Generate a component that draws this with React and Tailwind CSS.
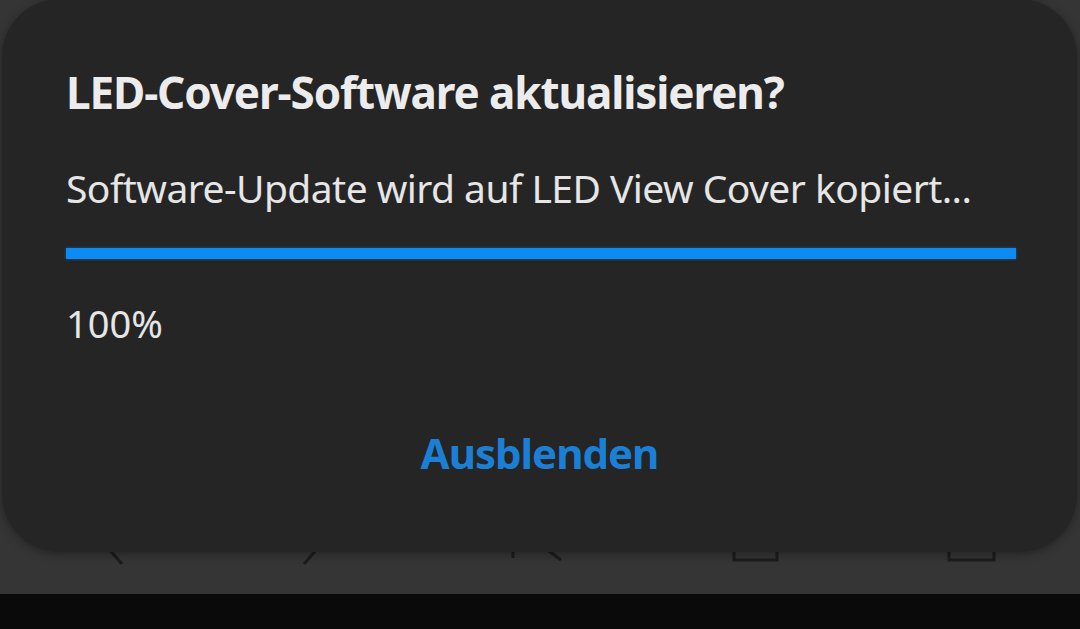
import React from "react";

const NavIcons = () => (
    <div className="absolute left-0 right-0 top-[528px] h-[40px]">
        {/* back-ish chevrons, home, recents — only their bottoms peek out */}
        <svg className="absolute left-[100px] top-0" width="30" height="40" viewBox="0 0 30 40">
            <path d="M22 4 L8 20 L22 36" fill="none" stroke="#1c1c1c" strokeWidth="3" />
        </svg>
        <svg className="absolute left-[296px] top-0" width="30" height="40" viewBox="0 0 30 40">
            <path d="M8 4 L22 20 L8 36" fill="none" stroke="#1c1c1c" strokeWidth="3" />
        </svg>
        <svg className="absolute left-[505px] top-0" width="70" height="40" viewBox="0 0 70 40">
            <path d="M8 4 L8 30" fill="none" stroke="#1c1c1c" strokeWidth="3" />
            <path d="M40 20 L56 32" fill="none" stroke="#1c1c1c" strokeWidth="3" />
        </svg>
        <svg className="absolute left-[731px] top-0" width="50" height="40" viewBox="0 0 50 40">
            <rect x="3" y="2" width="43" height="30" fill="none" stroke="#1c1c1c" strokeWidth="3" />
        </svg>
        <svg className="absolute left-[946px] top-0" width="52" height="40" viewBox="0 0 52 40">
            <rect x="3" y="2" width="45" height="30" fill="none" stroke="#1c1c1c" strokeWidth="3" />
        </svg>
    </div>
);

export default function App() {
    return (
        <div className="w-[1080px] h-[629px] bg-[#0a0a0a] overflow-hidden" style={{ fontFamily: "'Noto Sans', 'Open Sans', sans-serif" }}>
            <div className="relative h-[594px] bg-[#353535]">
                <NavIcons />

                {/* Dialog */}
                <div className="absolute left-[2px] right-[3px] top-[-1px] h-[553px] bg-[#252525] rounded-[58px] shadow-[0_2px_10px_rgba(0,0,0,0.35)] px-[64px] pt-[71px]">
                    <h1 className="text-[#ececec] font-bold text-[44px] leading-none tracking-[-1.1px]">
                        LED-Cover-Software aktualisieren?
                    </h1>
                    <p className="mt-[54px] text-[#e6e6e6] text-[39px] leading-none tracking-[-0.55px]">
                        Software-Update wird auf LED View Cover kopiert...
                    </p>
                    <div className="mt-[41px] mr-[-3px] h-[11px] bg-[#0b8bf3] shadow-[0_0_3px_rgba(11,139,243,0.5)]" />
                    <p className="mt-[45px] text-[#e6e6e6] text-[38px] leading-none">100%</p>
                    <div className="mt-[90px] flex justify-center">
                        <span className="text-[#1c7fd6] font-bold text-[42px] leading-none tracking-[-1px]">Ausblenden</span>
                    </div>
                </div>
            </div>
        </div>
    );
}
